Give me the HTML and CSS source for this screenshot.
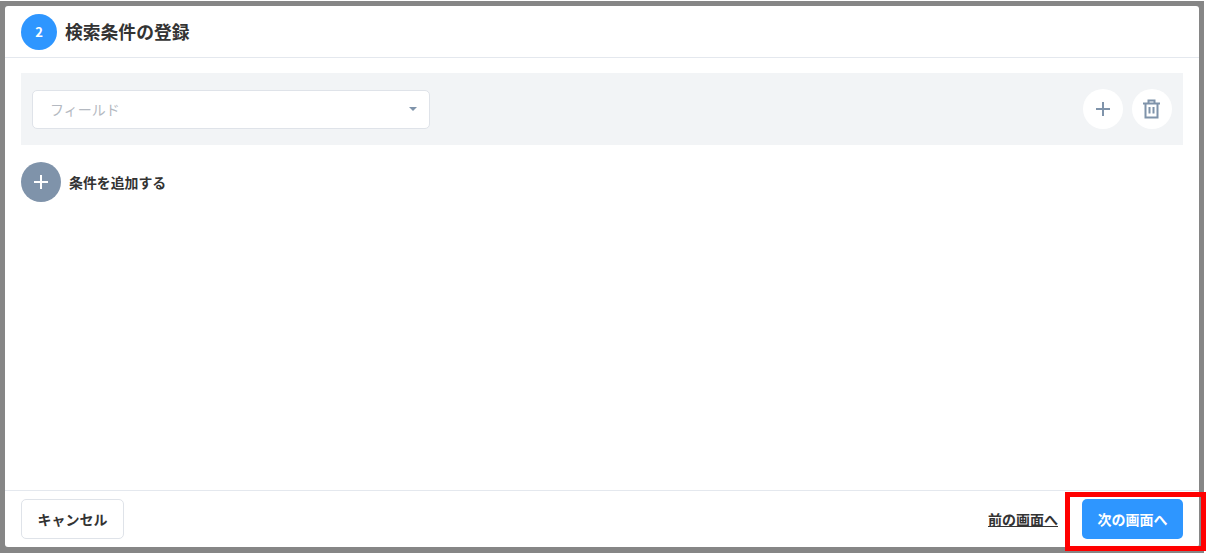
FILE: index.html
```html
<!DOCTYPE html>
<html lang="ja">

<head>
    <meta charset="UTF-8">
    <title>検索条件の登録</title>
    <link rel="stylesheet" href="styles.css">
</head>

<body>
    <section class="frame">
        <div class="panel">
            <header class="head">
                <span class="step">2</span>
                <h1 class="title">検索条件の登録</h1>
            </header>

            <div class="body">
                <div class="row">
                    <div class="select">
                        <span class="placeholder">フィールド</span>
                        <span class="caret"></span>
                    </div>
                    <div class="row-btns">
                        <span class="circle">
                            <svg width="16" height="16" viewBox="0 0 16 16">
                                <path d="M8 1v14M1 8h14" stroke="#7f93aa" stroke-width="2" fill="none" />
                            </svg>
                        </span>
                        <span class="circle">
                            <svg width="19" height="20" viewBox="0 0 19 20">
                                <path d="M0 4.500h17M5.500 4V1.500h6V4M2.500 5v13.500h12V5M6.500 8v6.500M10.500 8v6.500" stroke="#7f93aa" stroke-width="2" fill="none" />
                            </svg>
                        </span>
                    </div>
                </div>

                <div class="add">
                    <span class="circle circle-dark">
                        <svg width="14" height="14" viewBox="0 0 14 14">
                            <path d="M7 0v14M0 7h14" stroke="#fff" stroke-width="2" fill="none" />
                        </svg>
                    </span>
                    <span class="add-label">条件を追加する</span>
                </div>
            </div>

            <footer class="foot">
                <button class="btn btn-cancel">キャンセル</button>
                <div class="foot-right">
                    <a class="prev">前の画面へ</a>
                    <button class="btn btn-next">次の画面へ</button>
                </div>
            </footer>
        </div>
        <div class="highlight"></div>
    </section>
</body>

</html>
```

FILE: styles.css
```css
* {
    padding: 0;
    margin: 0;
    box-sizing: border-box;
}

body {
    background: #fff;
    font-family: "Noto Sans CJK JP", "Noto Sans", sans-serif;
    color: #333;
}

.frame {
    position: relative;
    width: 1204px;
    height: 552px;
    padding: 5px 5px 0;
    margin-top: 1px;
    background: #868686;
}

.panel {
    display: flex;
    flex-direction: column;
    height: 541px;
    background: #fff;
    border-radius: 3px;
}

/* ヘッダー */
.head {
    display: flex;
    align-items: center;
    gap: 8px;
    height: 52px;
    padding: 0 16px;
    border-bottom: 1px solid #e4e8ee;
}

.step {
    display: flex;
    align-items: center;
    justify-content: center;
    width: 36px;
    height: 36px;
    border-radius: 50%;
    background: #2e96ff;
    color: #fff;
    font-size: 13px;
    font-weight: 700;
}

.title {
    font-size: 17.8px;
    font-weight: 700;
    line-height: 24px;
    margin-bottom: 2px;
}

/* 条件 */
.body {
    flex: 1;
    padding: 15px 16px 0;
}

.row {
    display: flex;
    align-items: center;
    justify-content: space-between;
    height: 72px;
    padding: 0 11px;
    background: #f2f4f6;
}

.select {
    display: flex;
    align-items: center;
    justify-content: space-between;
    width: 398px;
    height: 39px;
    padding: 0 12px 0 17px;
    background: #fff;
    border: 1px solid #dfe3e9;
    border-radius: 5px;
}

.placeholder {
    font-size: 14px;
    color: #b4b9c1;
}

.caret {
    width: 0;
    height: 0;
    border-left: 4px solid transparent;
    border-right: 4px solid transparent;
    border-top: 4px solid #7f93aa;
}

.row-btns {
    display: flex;
    gap: 9px;
}

.circle {
    display: flex;
    align-items: center;
    justify-content: center;
    width: 40px;
    height: 40px;
    border-radius: 50%;
    background: #fff;
}

.circle-dark {
    background: #7f93aa;
}

.add {
    display: flex;
    align-items: center;
    gap: 8px;
    margin-top: 17px;
}

.add-label {
    font-size: 13.9px;
    font-weight: 700;
    margin-bottom: 1px;
}

/* フッター */
.foot {
    display: flex;
    align-items: center;
    justify-content: space-between;
    height: 57px;
    padding: 0 16px;
    border-top: 1px solid #e4e8ee;
}

.foot-right {
    display: flex;
    align-items: center;
    gap: 24px;
}

.btn {
    height: 40px;
    border-radius: 5px;
    font-family: inherit;
    font-size: 14px;
    font-weight: 700;
}

.btn-cancel {
    width: 103px;
    background: #fff;
    border: 1px solid #dfe3e9;
    color: #333;
}

.btn-next {
    width: 101px;
    background: #2e96ff;
    border: 0;
    color: #fff;
}

.prev {
    font-size: 14px;
    font-weight: 700;
    text-decoration: underline;
}

/* 赤枠 */
.highlight {
    position: absolute;
    left: 1065px;
    top: 491px;
    width: 141px;
    height: 59px;
    border: 5px solid #f00;
}
```
